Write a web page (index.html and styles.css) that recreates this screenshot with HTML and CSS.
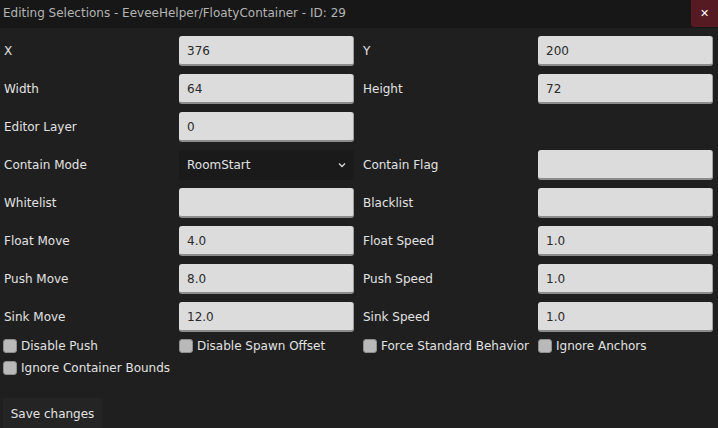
FILE: index.html
```html
<!DOCTYPE html>
<html>
<head>
<meta charset="utf-8">
<link rel="stylesheet" href="styles.css">
</head>
<body>
<div class="window">
  <div class="titlebar">
    <span class="title">Editing Selections - EeveeHelper/FloatyContainer - ID: 29</span>
    <span class="close">&#x2715;</span>
  </div>
  <div class="form">
    <span class="label c1">X</span><div class="input">376</div>
    <span class="label c3">Y</span><div class="input">200</div>
    <span class="label c1">Width</span><div class="input">64</div>
    <span class="label c3">Height</span><div class="input">72</div>
    <span class="label c1">Editor Layer</span><div class="input">0</div>
    <span class="empty"></span><span class="empty"></span>
    <span class="label c1">Contain Mode</span>
    <div class="select">RoomStart<svg class="chev" width="8" height="6" viewBox="0 0 8 6"><path d="M1 1.5 L4 4.5 L7 1.5" fill="none" stroke="#d8d8d8" stroke-width="1.3"/></svg></div>
    <span class="label c3">Contain Flag</span><div class="input"></div>
    <span class="label c1">Whitelist</span><div class="input"></div>
    <span class="label c3">Blacklist</span><div class="input"></div>
    <span class="label c1">Float Move</span><div class="input">4.0</div>
    <span class="label c3">Float Speed</span><div class="input">1.0</div>
    <span class="label c1">Push Move</span><div class="input">8.0</div>
    <span class="label c3">Push Speed</span><div class="input">1.0</div>
    <span class="label c1">Sink Move</span><div class="input">12.0</div>
    <span class="label c3">Sink Speed</span><div class="input">1.0</div>
  </div>
  <div class="checks">
    <label class="check"><span class="box"></span>Disable Push</label>
    <label class="check"><span class="box"></span>Disable Spawn Offset</label>
    <label class="check"><span class="box"></span>Force Standard Behavior</label>
    <label class="check"><span class="box"></span>Ignore Anchors</label>
    <label class="check"><span class="box"></span>Ignore Container Bounds</label>
  </div>
  <div class="actions">
    <button class="save">Save changes</button>
  </div>
</div>
</body>
</html>
```
FILE: styles.css
```css
html, body {
  margin: 0;
  padding: 0;
  background: #1f1f1f;
  width: 718px;
  height: 428px;
  overflow: hidden;
}
.window {
  font-family: "DejaVu Sans", sans-serif;
  font-size: 12px;
  color: #e2e2e2;
  background: #1f1f1f;
  height: 428px;
}
.titlebar {
  height: 28px;
  background: #171717;
  display: flex;
  align-items: flex-start;
  justify-content: space-between;
}
.title {
  padding-left: 3px;
  padding-top: 1px;
  color: #b4b4b4;
  font-size: 12px;
  line-height: 24px;
}
.close {
  width: 27px;
  height: 27px;
  background: #561a22;
  border-radius: 0 0 0 3px;
  color: #ffffff;
  font-size: 11px;
  font-weight: bold;
  display: flex;
  align-items: center;
  justify-content: center;
}
.form {
  display: grid;
  grid-template-columns: 179px 175px 184px 175px;
  grid-auto-rows: 30px;
  row-gap: 8px;
  padding-top: 8px;
}
.label {
  display: flex;
  align-items: center;
}
.c1 { padding-left: 4px; }
.c3 { padding-left: 9px; }
.input {
  box-sizing: border-box;
  background: #dcdcdc;
  border-radius: 3px;
  border-bottom: 2px solid #8c8c8c;
  border-right: 1px solid #a0a0a0;
  color: #2a2a2a;
  padding-left: 8px;
  display: flex;
  align-items: center;
  padding-top: 2px;
}
.select {
  box-sizing: border-box;
  background: #1a1a1a;
  border-radius: 3px;
  color: #e2e2e2;
  padding: 0 8px;
  display: flex;
  align-items: center;
  justify-content: space-between;
}
.chev { margin-top: -1px; }
.checks {
  display: grid;
  grid-template-columns: 176px 184px 175px 183px;
  grid-auto-rows: 22px;
  padding-top: 3px;
}
.check {
  display: flex;
  align-items: center;
  white-space: nowrap;
  padding-left: 3px;
}
.box {
  box-sizing: border-box;
  width: 14px;
  height: 14px;
  border-radius: 3px;
  background: #b9b9b9;
  border: 1px solid #8e8e8e;
  margin-right: 4px;
  flex: none;
}
.actions {
  padding: 19px 0 0 3px;
}
.save {
  font-family: "DejaVu Sans", sans-serif;
  font-size: 12px;
  color: #e2e2e2;
  background: #242424;
  border: none;
  border-radius: 3px;
  height: 32px;
  width: 99px;
  padding: 0;
  text-align: center;
}
```
